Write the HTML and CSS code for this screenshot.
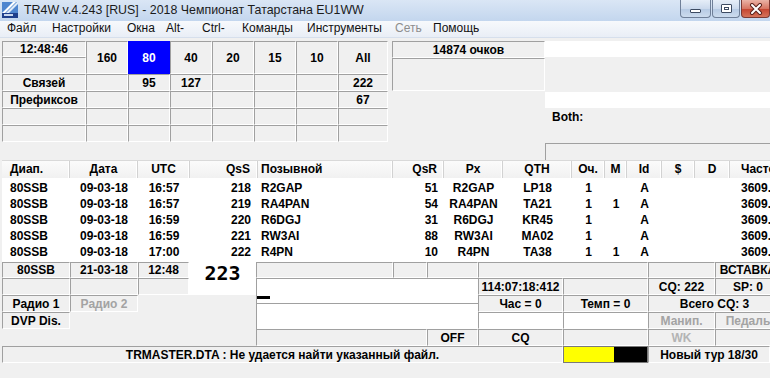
FILE: index.html
```html
<!DOCTYPE html>
<html lang="ru">
<head>
<meta charset="UTF-8" />
<title>TR4W v.4.243 [RUS]</title>
<link rel="stylesheet" href="styles.css">
</head>
<body>
<div class="window">
  <div class="titlebar">
    <svg class="app-icon" width="16" height="16" viewBox="0 0 16 16">
      <rect x="0" y="0" width="16" height="16" fill="#4f86cf"/>
      <polygon points="0,11 11,0 14,0 0,14" fill="#ffffff"/>
      <polygon points="4,11 15,0 16,0 16,2 7,11" fill="#dfeaf8"/>
      <rect x="0" y="11" width="16" height="5" fill="#1f3f8c"/>
      <rect x="2" y="12" width="9" height="2" fill="#c9d7ee"/>
    </svg>
    <span class="title">TR4W v.4.243 [RUS] - 2018 Чемпионат Татарстана EU1WW</span>
    <div class="caption">
      <span class="cbtn min"><i></i></span>
      <span class="cbtn max"><i></i></span>
      <span class="cbtn close">
        <svg width="14" height="12" viewBox="0 0 14 12">
          <path d="M3 2 L11 10 M11 2 L3 10" stroke="#5a221c" stroke-width="4" stroke-linecap="round"/>
          <path d="M3 2 L11 10 M11 2 L3 10" stroke="#ffffff" stroke-width="2" stroke-linecap="round"/>
        </svg>
      </span>
    </div>
  </div>

  <ul class="menubar">
    <li>Файл</li>
    <li>Настройки</li>
    <li>Окна</li>
    <li>Alt-</li>
    <li>Ctrl-</li>
    <li>Команды</li>
    <li>Инструменты</li>
    <li class="off">Сеть</li>
    <li>Помощь</li>
  </ul>

  <div class="client">
    <!-- band summary -->
    <div class="top">
      <div class="bands">
        <div class="cell">12:48:46</div>
        <div class="cell tall">160</div>
        <div class="cell tall active">80</div>
        <div class="cell tall">40</div>
        <div class="cell tall">20</div>
        <div class="cell tall">15</div>
        <div class="cell tall">10</div>
        <div class="cell tall">All</div>
        <div class="cell"></div>

        <div class="cell">Связей</div>
        <div class="cell"></div>
        <div class="cell">95</div>
        <div class="cell">127</div>
        <div class="cell"></div>
        <div class="cell"></div>
        <div class="cell"></div>
        <div class="cell">222</div>

        <div class="cell">Префиксов</div>
        <div class="cell"></div>
        <div class="cell"></div>
        <div class="cell"></div>
        <div class="cell"></div>
        <div class="cell"></div>
        <div class="cell"></div>
        <div class="cell">67</div>

        <div class="cell"></div><div class="cell"></div><div class="cell"></div><div class="cell"></div>
        <div class="cell"></div><div class="cell"></div><div class="cell"></div><div class="cell"></div>

        <div class="cell"></div><div class="cell"></div><div class="cell"></div><div class="cell"></div>
        <div class="cell"></div><div class="cell"></div><div class="cell"></div><div class="cell"></div>
      </div>

      <div class="score">
        <div class="cell score-total">14874 очков</div>
        <div class="cell score-extra"></div>
      </div>

      <div class="info">
        <div class="info-white"></div>
        <div class="info-gap"></div>
        <div class="info-white"></div>
        <div class="info-both">Both:</div>
        <div class="info-gap small"></div>
        <div class="info-box"></div>
      </div>
    </div>

    <!-- log -->
    <div class="log">
      <div class="log-row log-head">
        <span>Диап.</span><span>Дата</span><span>UTC</span><span>QsS</span><span>Позывной</span><span>QsR</span><span>Px</span><span>QTH</span><span>Оч.</span><span>M</span><span>Id</span><span>$</span><span>D</span><span>Частота</span>
      </div>
      <div class="log-body">
        <div class="log-row">
          <span>80SSB</span><span>09-03-18</span><span>16:57</span><span>218</span><span>R2GAP</span><span>51</span><span>R2GAP</span><span>LP18</span><span>1</span><span></span><span>A</span><span></span><span></span><span>3609.</span>
        </div>
        <div class="log-row">
          <span>80SSB</span><span>09-03-18</span><span>16:57</span><span>219</span><span>RA4PAN</span><span>54</span><span>RA4PAN</span><span>TA21</span><span>1</span><span>1</span><span>A</span><span></span><span></span><span>3609.</span>
        </div>
        <div class="log-row">
          <span>80SSB</span><span>09-03-18</span><span>16:59</span><span>220</span><span>R6DGJ</span><span>31</span><span>R6DGJ</span><span>KR45</span><span>1</span><span></span><span>A</span><span></span><span></span><span>3609.</span>
        </div>
        <div class="log-row">
          <span>80SSB</span><span>09-03-18</span><span>16:59</span><span>221</span><span>RW3AI</span><span>88</span><span>RW3AI</span><span>MA02</span><span>1</span><span></span><span>A</span><span></span><span></span><span>3609.</span>
        </div>
        <div class="log-row">
          <span>80SSB</span><span>09-03-18</span><span>17:00</span><span>222</span><span>R4PN</span><span>10</span><span>R4PN</span><span>TA38</span><span>1</span><span>1</span><span>A</span><span></span><span></span><span>3609.</span>
        </div>
      </div>
    </div>

    <!-- entry panel -->
    <div class="entry">
      <div class="cell">80SSB</div>
      <div class="cell">21-03-18</div>
      <div class="cell">12:48</div>
      <div class="cell number">223</div>
      <div class="cell"></div>
      <div class="cell"></div>
      <div class="cell"></div>
      <div class="cell span2"></div>
      <div class="cell"></div>
      <div class="cell">ВСТАВКА</div>

      <div class="cell"></div>
      <div class="cell"></div>
      <div class="cell"></div>
      <div class="fields">
        <div class="field"><span class="caret"></span></div>
        <div class="field"></div>
      </div>
      <div class="cell">114:07:18:412</div>
      <div class="cell"></div>
      <div class="cell">CQ: 222</div>
      <div class="cell">SP: 0</div>

      <div class="cell">Радио 1</div>
      <div class="cell dim">Радио 2</div>
      <div class="span2"></div>
      <div class="cell">Час = 0</div>
      <div class="cell">Темп = 0</div>
      <div class="cell span2">Всего CQ: 3</div>

      <div class="cell">DVP Dis.</div>
      <div class="span3"></div>
      <div class="cell white"></div>
      <div class="cell white"></div>
      <div class="cell dim">Манип.</div>
      <div class="cell dim">Педаль</div>

      <div class="span4"></div>
      <div class="cell span2"></div>
      <div class="cell">OFF</div>
      <div class="cell">CQ</div>
      <div class="cell"></div>
      <div class="cell faint">WK</div>
      <div class="cell"></div>
    </div>

    <div class="status">
      <div class="cell">TRMASTER.DTA : Не удается найти указанный файл.</div>
      <div class="meter"><span class="meter-fill"></span></div>
      <div class="cell">Новый тур 18/30</div>
    </div>
  </div>
</div>
</body>
</html>
```

FILE: styles.css
```css
/* TR4W main window */
* {
  box-sizing: border-box;
}
html, body {
  margin: 0;
  padding: 0;
}
body {
  width: 770px;
  height: 378px;
  overflow: hidden;
  background: #f0f0f0;
  font-family: "Liberation Sans", Arial, sans-serif;
  font-size: 12px;
  color: #000;
}
.window {
  width: 770px;
}

/* title bar */
.titlebar {
  height: 21px;
  display: flex;
  align-items: flex-start;
  background: linear-gradient(#dae6f5, #c3d6ee);
}
.app-icon {
  margin: 2px 6px 0 2px;
  flex: none;
}
.title {
  flex: 1;
  line-height: 20px;
  font-size: 12.4px;
  color: #1b1b1b;
  white-space: nowrap;
}
.caption {
  display: flex;
  gap: 1px;
}
.cbtn {
  height: 18px;
  display: flex;
  align-items: center;
  justify-content: center;
  border: 1px solid #6f7f98;
  border-top: none;
  border-radius: 0 0 4px 4px;
  background: linear-gradient(#e6eef8, #ccdaed 50%, #b5c9e3 51%, #cddcee);
}
.cbtn.min {
  width: 31px;
}
.cbtn.min i {
  display: block;
  width: 11px;
  height: 4px;
  margin-top: 5px;
  border: 1px solid #3d4b62;
  border-radius: 1px;
  background: #fff;
}
.cbtn.max {
  width: 28px;
}
.cbtn.max i {
  display: block;
  width: 11px;
  height: 9px;
  border: 1px solid #3d4b62;
  border-radius: 1px;
  background: #fff;
  box-shadow: inset 0 0 0 2px #fff, inset 0 0 0 3px #3d4b62;
}
.cbtn.close {
  width: 29px;
  border-color: #7c3a33;
  background: linear-gradient(#eab3a6, #d77663 50%, #c4432f 51%, #d5735a);
}

/* menu */
.menubar {
  display: grid;
  grid-template-columns: 45px 75px 39px 36px 40px 65px 88px 38px 60px;
  height: 17px;
  margin: 0;
  padding: 0;
  list-style: none;
  background: linear-gradient(#f7f9fc, #e9eef6);
  border-bottom: 1px solid #d6dfec;
}
.menubar li {
  padding-left: 7px;
  line-height: 15px;
  white-space: nowrap;
  color: #111;
}
.menubar .off {
  color: #8d8d8d;
}

/* client area */
.client {
  padding-left: 2px;
  overflow: hidden;
}
.cell {
  display: flex;
  align-items: center;
  justify-content: center;
  border: 1px solid;
  border-color: #a0a0a0 #fff #fff #a0a0a0;
  font-weight: bold;
  white-space: nowrap;
  overflow: hidden;
}

.top {
  display: flex;
  height: 122px;
  padding-top: 3px;
}
.bands {
  display: grid;
  grid-template-columns: 84px repeat(6, 42px) 50px;
  grid-template-rows: 16px repeat(5, 17px);
  align-self: flex-start;
}
.tall {
  grid-row: span 2;
}
.active {
  background: #0000ff;
  border-color: #0000ff;
  color: #fff;
}
.score {
  width: 153px;
  margin-left: 4px;
  display: flex;
  flex-direction: column;
}
.score-total {
  height: 17px;
}
.score-extra {
  height: 33px;
}
.info {
  flex: 1;
  display: flex;
  flex-direction: column;
}
.info-white {
  height: 16px;
  background: #fff;
}
.info-gap {
  height: 35px;
}
.info-gap.small {
  height: 18px;
}
.info-both {
  height: 17px;
  padding-left: 7px;
  display: flex;
  align-items: center;
  font-weight: bold;
}
.info-box {
  height: 17px;
  border-top: 1px solid #a0a0a0;
  border-left: 1px solid #a0a0a0;
}

/* log */
.log-row {
  display: grid;
  grid-template-columns: 68px 68px 52px 68px 135px 51px 59px 69px 33px 22px 35px 33px 35px 80px;
  height: 16px;
  line-height: 16px;
  font-weight: bold;
}
.log-row span {
  text-align: center;
  white-space: nowrap;
  overflow: hidden;
}
.log-row span:nth-child(1) {
  text-align: left;
  padding-left: 8px;
}
.log-row span:nth-child(4) {
  text-align: right;
  padding-right: 7px;
}
.log-row span:nth-child(5) {
  text-align: left;
  padding-left: 3px;
}
.log-row span:nth-child(6) {
  text-align: right;
  padding-right: 6px;
}
.log-row span:nth-child(14) {
  text-align: left;
  padding-left: 11px;
}
.log-head {
  height: 18px;
  line-height: 17px;
  background: linear-gradient(#fbfbfb, #f1f1f1);
  border-top: 1px solid #d9d9d9;
}
.log-head span {
  border-right: 1px solid #d2d2d2;
  box-shadow: inset -1px 0 0 #fff;
}
.log-body {
  height: 84px;
  padding-top: 2px;
  background: #fff;
}

/* entry panel */
.entry {
  display: grid;
  grid-template-columns: 68px 68px 51px 67px 137px 34px 51px 85px 85px 67px 66px;
  grid-template-rows: 16px repeat(4, 17px);
}
.span2 {
  grid-column: span 2;
}
.span3 {
  grid-column: span 3;
}
.span4 {
  grid-column: span 4;
}
.number {
  grid-row: span 2;
  align-items: flex-start;
  overflow: visible;
  background: #fff;
  border-color: #fff;
  font-family: "DejaVu Sans Mono", monospace;
  font-size: 20px;
  line-height: 20px;
  padding-top: 0;
}
.fields {
  grid-column: span 3;
  grid-row: span 3;
  display: flex;
  flex-direction: column;
}
.field {
  height: 25px;
  background: #fff;
  border-top: 1px solid #a0a0a0;
  border-left: 1px solid #a0a0a0;
}
.field + .field {
  height: 26px;
}
.caret {
  display: block;
  width: 13px;
  height: 3px;
  margin-top: 17px;
  background: #000;
}
.white {
  background: #fff;
}
.dim {
  color: #a3a3a3;
}
.faint {
  color: #b4b4b4;
}

/* status line */
.status {
  display: grid;
  grid-template-columns: 561px 85px 122px;
  height: 17px;
}
.meter {
  display: flex;
  background: #000;
  border: 1px solid #7a7a7a;
}
.meter-fill {
  width: 50px;
  background: #ffff00;
}
```
